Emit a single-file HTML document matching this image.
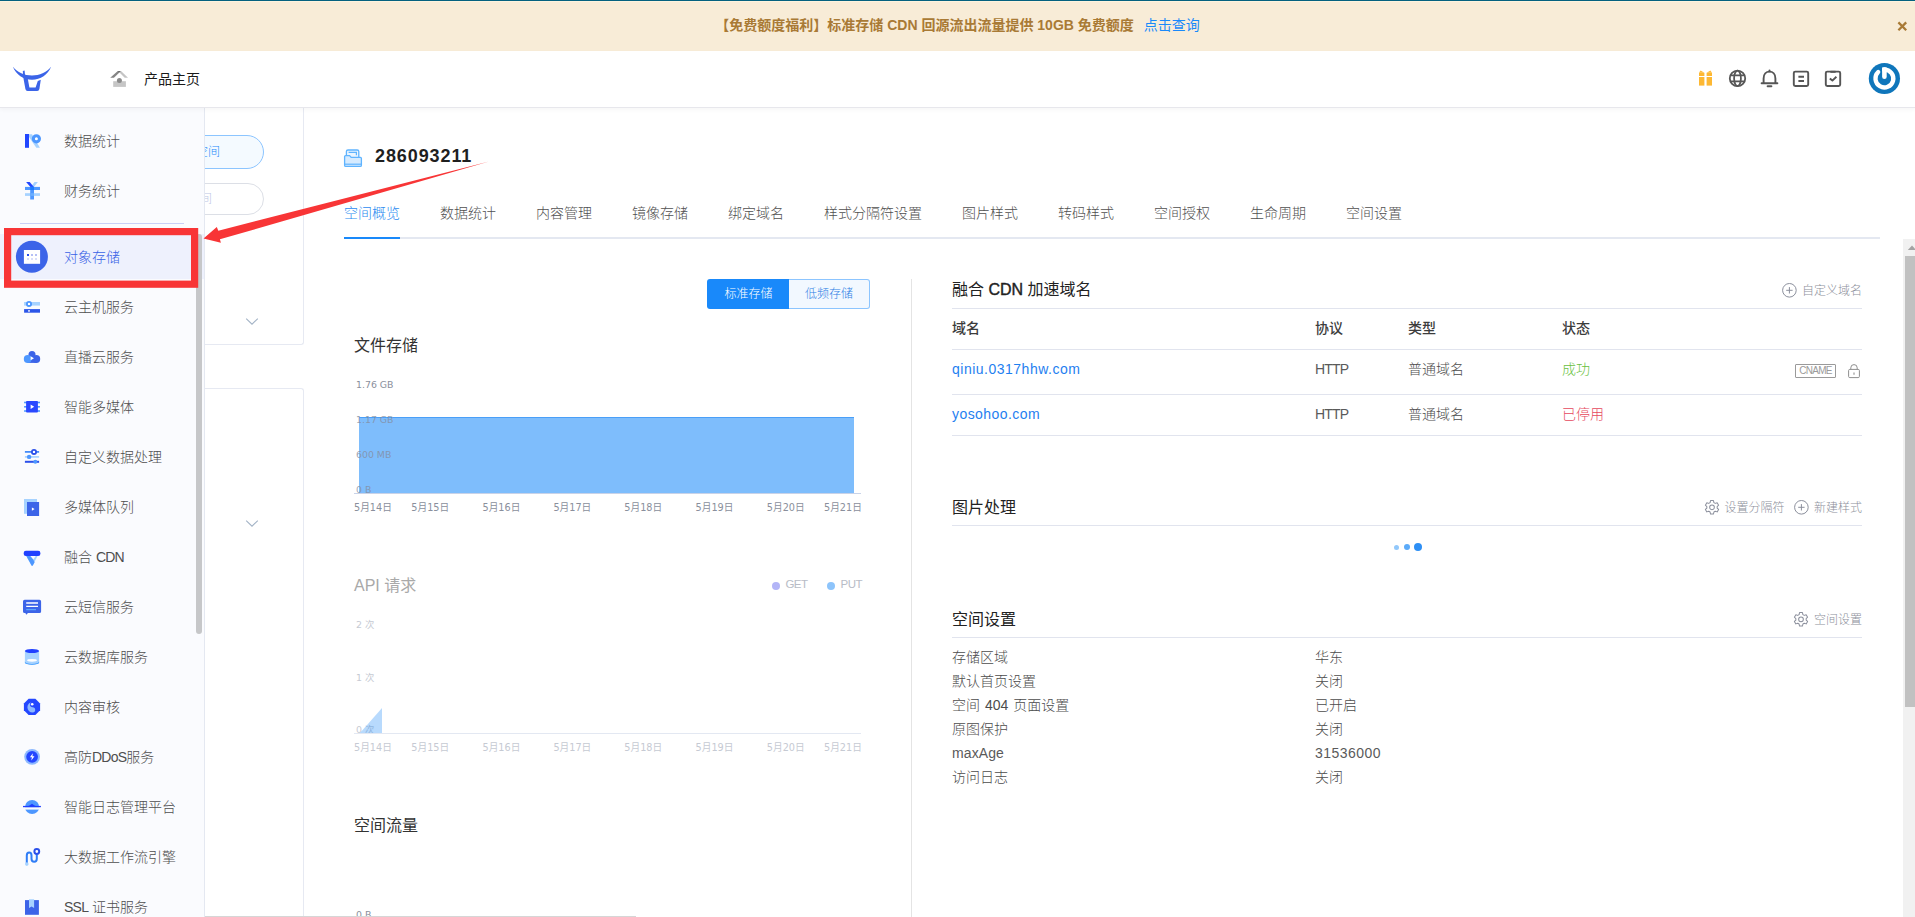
<!DOCTYPE html>
<html lang="zh-CN">
<head>
<meta charset="utf-8">
<title>对象存储 - 286093211</title>
<style>
*{box-sizing:border-box;margin:0;padding:0}
html,body{width:1915px;height:917px;overflow:hidden;background:#fff}
body{font-weight:300;position:relative;font-family:"Liberation Sans","Noto Sans CJK SC",sans-serif;font-size:14px;color:#333;-webkit-font-smoothing:antialiased}
.abs{position:absolute}
.t{position:absolute;white-space:nowrap;line-height:20px;height:20px}
/* top */
#topline{left:0;top:0;width:1915px;height:1px;background:#04617f}
#banner{left:0;top:1px;width:1915px;height:50px;background:#f8ecd7;box-shadow:inset 0 1px 0 #fdf4de}
#banner .msg{left:0;width:1915px;top:14px;text-align:center;font-weight:bold;color:#a97a35;font-size:14px;padding-right:0}
#banner .msg a{color:#1989fa;font-weight:normal;margin-left:6px;text-decoration:none}
#header{left:0;top:51px;width:1915px;height:57px;background:#fff;border-bottom:1px solid #e7e7ec;box-shadow:0 2px 4px rgba(0,0,0,.035);z-index:5}
/* sidebar */
#sidebar{left:0;top:107px;width:205px;height:810px;background:#fafbfe;border-right:1px solid #e4e8f1;z-index:3;overflow:hidden}
.si{position:absolute;left:0;width:204px;height:50px}
.si .lbl{position:absolute;left:64px;top:15px;line-height:20px;font-size:14px;color:#4e4e4e;white-space:nowrap}
.si .lbl i{font-style:normal;letter-spacing:-.75px}
.si svg{position:absolute;left:22px;top:15px;width:20px;height:20px;overflow:visible}
.si.on{background:linear-gradient(#eef1fd,#eef1fd) 0 2px/100% 45px no-repeat}
.si.on .lbl{color:#3a63e6}
/* second column */
#col2{left:205px;top:107px;width:99px;height:810px;background:#fff;z-index:1;overflow:hidden}
#col2 .p{position:absolute;left:0;width:99px;background:#fff;border-right:1px solid #e4e7f0}
/* main */
#main{left:304px;top:107px;width:1599px;height:810px;background:#fff;z-index:1}
.tab{font-size:14px;color:#555;top:203px}
.h16{font-weight:400;font-size:16px;color:#333;line-height:22px;height:22px}
.ax{font-weight:400;font-size:9.4px;color:#8a8f9c;line-height:12px;height:12px;font-family:"DejaVu Sans","Noto Sans CJK SC",sans-serif}
.hl{position:absolute;height:1px;background:#e1e4ee}
.g12{font-size:12px;color:#8d909b;line-height:16px;height:16px}
.row{font-size:14px;color:#4c4c4c}
</style>
</head>
<body>
<div id="topline" class="abs" style="z-index:9"></div>
<div id="banner" class="abs">
  <div class="t msg">【免费额度福利】标准存储 CDN 回源流出流量提供 10GB 免费额度 <a>点击查询</a></div>
  <svg class="abs" style="left:1896.6px;top:20.2px" width="11" height="11" viewBox="0 0 11 11"><path d="M1.4 1.4L9.2 9.2M9.2 1.4L1.4 9.2" stroke="#a97a35" stroke-width="2.3" fill="none"/></svg>
</div>
<div id="header" class="abs">

  <svg class="abs" style="left:0;top:0" width="210" height="56" viewBox="0 51 210 56">
    <!-- logo -->
    <path d="M12.8 66.6 C17.5 72.8 24.5 75.5 32 75.5 C39.5 75.5 46.5 72.8 51.2 66.6 C48 75 40.5 79.8 32 79.8 C23.5 79.8 16 75 12.8 66.6Z" fill="#3b64e8"/>
    <path d="M22.8 71 L24.6 70.4 L25.2 76.6 L27.8 78.8 L29.4 87.6 L35.6 87.6 L37.8 81 L40.8 79.8 L39.4 89 Q39 90.9 37.2 90.9 L27.6 90.9 Q25.8 90.9 25.4 89 L23.4 78 Z" fill="#3b64e8"/>
    <!-- home icon -->
    <path d="M110.2 77.8 L117.8 70.9 L121 70.9 L113.9 77.8Z" fill="#858585"/>
    <path d="M117.8 70.9 L121 70.9 L119.6 72.4Z" fill="#6a6a6a"/>
    <path d="M121 70.9 L128 77.8 L124.7 77.8 L119.5 72.6Z" fill="#c4c4c4"/>
    <rect x="113.2" y="81.2" width="12.7" height="5.7" fill="#c6c6c6"/>
    <circle cx="119.4" cy="80.6" r="2.5" fill="#8a8a8a"/>
  </svg>
  <div class="t" style="left:144px;top:18px;color:#1a1a1a;font-weight:400">产品主页</div>
  <svg class="abs" style="left:1690px;top:7px" width="225" height="44" viewBox="1690 58 225 44">
    <!-- gift -->
    <g fill="#fdb833">
      <path d="M1699 72.8 L1700.6 70.4 L1704.4 72.8Z"/><path d="M1706.6 72.8 L1710.4 70.4 L1712 72.8Z"/>
      <rect x="1699" y="72.8" width="5.4" height="3.2"/><rect x="1706.6" y="72.8" width="5.4" height="3.2"/>
      <rect x="1699" y="77" width="5.4" height="8.6"/><rect x="1706.6" y="77" width="5.4" height="8.6"/>
    </g>
    <!-- globe -->
    <g fill="none" stroke="#575757" stroke-width="1.8">
      <circle cx="1737.5" cy="78.4" r="7.7"/>
      <ellipse cx="1737.5" cy="78.4" rx="3.4" ry="7.7"/>
      <path d="M1730.6 75.4 H1744.4 M1730.6 81.4 H1744.4"/>
    </g>
    <!-- bell -->
    <g fill="none" stroke="#555" stroke-width="1.9" stroke-linecap="round" stroke-linejoin="round">
      <path d="M1761.6 83.2 H1777.4 M1763.6 83.2 V78.4 C1763.6 74 1766.2 71.6 1769.5 71.6 C1772.8 71.6 1775.4 74 1775.4 78.4 V83.2"/>
      <path d="M1769.5 71.4 V70.4"/>
      <path d="M1767.6 86.2 H1771.4"/>
    </g>
    <!-- doc -->
    <g fill="none" stroke="#555" stroke-width="1.9" stroke-linejoin="round">
      <rect x="1793.8" y="71.6" width="14.4" height="14.4" rx="1.4"/>
      <path d="M1798.4 76.8 H1804 M1798.4 81 H1804"/>
    </g>
    <!-- check -->
    <g fill="none" stroke="#555" stroke-width="1.9" stroke-linejoin="round">
      <rect x="1825.8" y="71.6" width="14.4" height="14.4" rx="1.4"/>
      <path d="M1830.4 71.8 H1835.6" stroke-width="2"/>
      <path d="M1829.8 78.4 L1832.4 80.6 L1836.4 76.8"/>
    </g>
    <!-- avatar -->
    <circle cx="1884.4" cy="78.5" r="15.6" fill="#0f76bb"/>
    <path d="M1884.4 69.55 A8.95 8.95 0 1 1 1878.2 72.05" fill="none" stroke="#fff" stroke-width="4.3" stroke-linecap="round"/>
    <path d="M1884.4 69.6 V76.8" stroke="#fff" stroke-width="4.6" stroke-linecap="round"/>
    <rect x="1882.1" y="67.4" width="4.6" height="4" fill="#fff"/>
  </svg>

</div>
<div id="sidebar" class="abs">
<!--SB0-->
<div class="si" style="top:9px"><svg viewBox="0 0 20 20"><path d="M7 3.2 H10 L17.9 16.8 H14.3 L7 6Z" fill="#a6d2ff"/><rect x="3" y="3" width="4" height="13.8" fill="#2146ff"/><circle cx="14.4" cy="7.8" r="3.05" fill="#fff" stroke="#4d97ff" stroke-width="3.1"/></svg><span class="lbl">数据统计</span></div>
<div class="si" style="top:59px"><svg viewBox="0 0 20 20"><path d="M15.9 1.1 L12.5 1.1 L8.8 5.9 L11.9 5.9Z" fill="#a6d2ff"/><path d="M4.1 1.1 L7.7 1.1 L11.9 5.9 L8.4 5.9Z" fill="#2146ff"/><rect x="3" y="12.2" width="15" height="2.7" fill="#a6d2ff"/><rect x="8.2" y="5.9" width="3.8" height="12.6" fill="#4d97ff"/><rect x="3" y="5.9" width="15" height="3.1" fill="#4d97ff"/><rect x="8.2" y="5.9" width="3.8" height="3.1" fill="#1a7bff"/><rect x="8.2" y="12.2" width="3.8" height="2.7" fill="#6aaeff"/></svg><span class="lbl">财务统计</span></div>
<div class="abs" style="left:20px;top:116px;width:164px;height:1px;background:#c9d0f7"></div>
<div class="si on" style="top:125px"><svg viewBox="0 0 20 20"><circle cx="9.9" cy="9.8" r="16" fill="#3c64e8"/><rect x="1.9" y="3" width="16.2" height="13.8" fill="#fff"/><rect x="5" y="7" width="2" height="2" fill="#2b50ea"/><rect x="9" y="7" width="2" height="2" fill="#b5bff5"/><rect x="13" y="7" width="2" height="2" fill="#b5bff5"/><g fill="#d9defa"><rect x="5" y="11" width="2" height="2"/><rect x="9" y="11" width="2" height="2"/><rect x="13" y="11" width="2" height="2"/></g></svg><span class="lbl">对象存储</span></div>
<div class="si" style="top:175px"><svg viewBox="0 0 20 20"><rect x="2.1" y="5" width="15.9" height="3.6" fill="#a6d2ff"/><circle cx="7" cy="6.9" r="2.1" fill="#fff" stroke="#4d97ff" stroke-width="1.8"/><rect x="2.1" y="12.1" width="15.9" height="3.6" fill="#2b55e8"/><rect x="6.2" y="13.1" width="1.6" height="1.6" fill="#fff"/></svg><span class="lbl">云主机服务</span></div>
<div class="si" style="top:225px"><svg viewBox="0 0 20 20"><circle cx="10" cy="7.4" r="3.5" fill="#3c64e8"/><circle cx="14.3" cy="12" r="3.9" fill="#3c64e8"/><rect x="5.6" y="9.4" width="8.8" height="6.5" fill="#3c64e8"/><circle cx="5.7" cy="12" r="3.9" fill="#4d97ff"/><path d="M8.6 9.2 L12 11.2 L8.6 13.2Z" fill="#fff"/></svg><span class="lbl">直播云服务</span></div>
<div class="si" style="top:275px"><svg viewBox="0 0 20 20"><g fill="#4d97ff"><rect x="2.1" y="4.7" width="15.9" height="1.6"/><rect x="2.1" y="9" width="15.9" height="1.6"/><rect x="2.1" y="13.2" width="15.9" height="1.6"/></g><rect x="4.1" y="4" width="11.8" height="11.6" rx=".8" fill="#2a48ff"/><path d="M8.6 7.6 L12.2 9.8 L8.6 12Z" fill="#fff"/></svg><span class="lbl">智能多媒体</span></div>
<div class="si" style="top:325px"><svg viewBox="0 0 20 20"><path d="M2.9 4.9 H17.1" stroke="#3c86f7" stroke-width="1.7"/><circle cx="12" cy="4.9" r="2.1" fill="#fff" stroke="#2b50ea" stroke-width="1.8"/><path d="M2.9 9.9 H17.1" stroke="#a6d2ff" stroke-width="1.7"/><circle cx="7.1" cy="9.9" r="2.2" fill="#4d97ff"/><path d="M2.9 14.8 H17.1" stroke="#2b50ea" stroke-width="2"/><circle cx="13.3" cy="14.8" r="2" fill="#4d97ff"/></svg><span class="lbl">自定义数据处理</span></div>
<div class="si" style="top:375px"><svg viewBox="0 0 20 20"><rect x="2" y="2" width="13" height="14.8" fill="#a6d2ff"/><rect x="5" y="5" width="12.1" height="14" fill="#3c64e8"/><path d="M9.9 10.4 L12.6 12.1 L9.9 13.8Z" fill="#fff"/></svg><span class="lbl">多媒体队列</span></div>
<div class="si" style="top:425px"><svg viewBox="0 0 20 20"><path d="M3.2 7 H16.5 L10.8 18.2 Q10.1 19.4 9.4 18.2Z" fill="#a6d2ff"/><path d="M3.2 7 H8.4 L12.6 15.2 L10.8 18.4 Q10.1 19.4 9.4 18.2Z" fill="#4d97ff"/><path d="M8 8.8 H13.8 L11.4 12.6Z" fill="#fafbfe"/><rect x="1.7" y="3.7" width="16.7" height="5.2" rx="2.2" fill="#2040ff"/></svg><span class="lbl">融合 <i>CDN</i></span></div>
<div class="si" style="top:475px"><svg viewBox="0 0 20 20"><path d="M2.6 2.8 H17.5 Q19.1 2.8 19.1 4.4 V14.4 Q19.1 16 17.5 16 H6 L4.2 17.8 L3.4 16 H2.6 Q1 16 1 14.4 V4.4 Q1 2.8 2.6 2.8Z" fill="#3c64e8"/><path d="M4.2 6 H16 M4.2 9.4 H16" stroke="#fff" stroke-width="1.3"/><path d="M4.2 12.6 H14" stroke="#5aa5ff" stroke-width="1.3"/></svg><span class="lbl">云短信服务</span></div>
<div class="si" style="top:525px"><svg viewBox="0 0 20 20"><path d="M2.9 4 V15.4 A7.1 2.3 0 0 0 17.1 15.4 V4Z" fill="#a6d2ff"/><path d="M2.9 14.6 V15.4 A7.1 2.3 0 0 0 17.1 15.4 V14.6 A7.1 2.3 0 0 1 2.9 14.6Z" fill="#3b9bff"/><ellipse cx="10" cy="13.3" rx="5" ry="1.4" fill="#fff"/><ellipse cx="10" cy="4" rx="7.1" ry="2.1" fill="#2040ff"/></svg><span class="lbl">云数据库服务</span></div>
<div class="si" style="top:575px"><svg viewBox="0 0 20 20"><path d="M6.6 1.8 H13.4 L18.1 6.5 V13.3 L13.4 18 H6.6 L1.9 13.3 V6.5Z" fill="#2447ff"/><path d="M10.6 5 A5.2 5.2 0 0 0 10.6 15.4 A2.6 2.6 0 0 0 10.6 10.2 A2.6 2.6 0 0 1 10.6 5Z" fill="#8db9ff"/><circle cx="10.2" cy="7.2" r="1.3" fill="#fff"/></svg><span class="lbl">内容审核</span></div>
<div class="si" style="top:625px"><svg viewBox="0 0 20 20"><circle cx="10.1" cy="9.8" r="7.9" fill="#8db9ff"/><circle cx="10.1" cy="9.8" r="5.9" fill="#2447ff"/><path d="M10.9 6.2 L7.9 10.3 H9.9 L9.3 13.4 L12.5 9.2 H10.4Z" fill="#fff"/></svg><span class="lbl">高防<i>DDoS</i>服务</span></div>
<div class="si" style="top:675px"><svg viewBox="0 0 20 20"><circle cx="10.1" cy="10" r="7.1" fill="#4d97ff"/><rect x="2" y="10.2" width="16.4" height="2.4" fill="#fafbfe"/><path d="M4.2 9.6 Q7 9.2 10 6.7 Q13 9.2 15.8 9.6Z" fill="#2040ff"/><rect x="1" y="8.9" width="17.9" height="1.3" fill="#2040ff"/></svg><span class="lbl">智能日志管理平台</span></div>
<div class="si" style="top:725px"><svg viewBox="0 0 20 20"><path d="M4.8 16.5 V8.4 Q4.8 5.4 7.2 5.4 Q9.5 5.4 9.5 8.4 V11.8 Q9.5 14.8 12.2 14.8 Q14.8 14.8 14.8 11.8 V7.6" fill="none" stroke="#2f7df6" stroke-width="2"/><circle cx="14.8" cy="4.5" r="2.4" fill="#fff" stroke="#2b50ea" stroke-width="2"/><circle cx="4.8" cy="17.1" r="1.8" fill="#a6d2ff"/></svg><span class="lbl">大数据工作流引擎</span></div>
<div class="si" style="top:775px"><svg viewBox="0 0 20 20"><rect x="3" y="3.1" width="13.9" height="14.7" fill="#3c64e8"/><path d="M7 2.2 H12.1 V10.9 L9.55 9.5 L7 10.9Z" fill="#a6d2ff"/></svg><span class="lbl"><i>SSL</i> 证书服务</span></div>
<div class="abs" style="left:196px;top:127px;width:6px;height:400px;border-radius:3px;background:#c6c7c9"></div>
<!--SB1-->
</div>
<div id="col2" class="abs">

  <div class="abs" style="left:0;top:0;width:99px;height:810px;background:#fff"></div>
  <div class="abs" style="left:0;top:0;width:99px;height:238px;border-right:1px solid #e6e9f2;border-bottom:1px solid #e6e9f2;border-radius:0 0 3px 0"></div>
  <div class="abs" style="left:0;top:281px;width:99px;height:540px;border-right:1px solid #e6e9f2;border-top:1px solid #e6e9f2;border-radius:0 3px 0 0"></div>
  <div class="abs" style="left:-60px;top:28px;width:119px;height:34px;border:1px solid #8cc5ff;border-radius:17px;background:#f4faff"></div>
  <div class="t" style="left:-33px;top:35px;font-size:12px;color:#1989fa">新建空间</div>
  <div class="abs" style="left:-60px;top:76px;width:119px;height:32px;border:1px solid #dcdfe6;border-radius:16px;background:#fff"></div>
  <div class="t" style="left:-41px;top:82px;font-size:12px;color:#bcc6e4">搜索空间</div>
  <svg class="abs" style="left:39px;top:209px" width="16" height="12" viewBox="0 0 16 12"><path d="M2.2 2.6 L8 8.2 L13.8 2.6" fill="none" stroke="#a3b3c6" stroke-width="1.1"/></svg>
  <svg class="abs" style="left:39px;top:411px" width="16" height="12" viewBox="0 0 16 12"><path d="M2.2 2.6 L8 8.2 L13.8 2.6" fill="none" stroke="#a3b3c6" stroke-width="1.1"/></svg>

</div>
<div id="main" class="abs">
<!--MAIN-->
</div>
<!--MN0-->
<div id="layer" class="abs" style="left:0;top:0;width:1915px;height:917px;z-index:2">
<svg class="abs" style="left:343px;top:148px" width="20" height="20" viewBox="343 148 20 20"><path d="M346.4 157 V151.6 Q346.4 150 348 150 H357.2 Q358.8 150 358.8 151.6 V157" fill="#eaf5ff" stroke="#5fb4ff" stroke-width="1.3"/><path d="M348.6 152.4 H356.4 V155.2" fill="none" stroke="#5fb4ff" stroke-width="1.2"/><path d="M345.6 155.6 H349.6 L351.2 157.4 H360.4 Q361.4 157.4 361.4 158.4 V165.2 Q361.4 166.4 360.2 166.4 H345.8 Q344.6 166.4 344.6 165.2 V156.6 Q344.6 155.6 345.6 155.6Z" fill="#d6ebff" stroke="#5fb4ff" stroke-width="1.3"/><path d="M344.8 164.2 H361.2" stroke="#5fb4ff" stroke-width="1.2"/></svg>
<div class="t " style="left:375px;top:143.5px;font-size:18px;font-weight:bold;color:#1f1f1f;letter-spacing:.9px;line-height:24px;height:24px">286093211</div>
<div class="t " style="left:344px;top:202.6px;color:#2d8cf0">空间概览</div>
<div class="t " style="left:440px;top:202.6px;color:#505050">数据统计</div>
<div class="t " style="left:536px;top:202.6px;color:#505050">内容管理</div>
<div class="t " style="left:632px;top:202.6px;color:#505050">镜像存储</div>
<div class="t " style="left:728px;top:202.6px;color:#505050">绑定域名</div>
<div class="t " style="left:824px;top:202.6px;color:#505050">样式分隔符设置</div>
<div class="t " style="left:962px;top:202.6px;color:#505050">图片样式</div>
<div class="t " style="left:1058px;top:202.6px;color:#505050">转码样式</div>
<div class="t " style="left:1154px;top:202.6px;color:#505050">空间授权</div>
<div class="t " style="left:1250px;top:202.6px;color:#505050">生命周期</div>
<div class="t " style="left:1346px;top:202.6px;color:#505050">空间设置</div>
<div class="abs" style="left:344px;top:237px;width:1536px;height:2px;background:#e4e8f1"></div>
<div class="abs" style="left:344px;top:237px;width:56px;height:2px;background:#1989fa"></div>
<div class="abs" style="left:707px;top:279px;width:83px;height:30px;background:#1989fa;border-radius:3px 0 0 3px;color:#fff;font-size:12px;line-height:30px;text-align:center">标准存储</div>
<div class="abs" style="left:789px;top:279px;width:81px;height:30px;background:#f2f8ff;border:1px solid #8cc5ff;border-left:0;border-radius:0 3px 3px 0;color:#2d7fe5;font-size:12px;line-height:28px;text-align:center">低频存储</div>
<div class="abs" style="left:911px;top:279px;width:1px;height:640px;background:#e4e4e4"></div>
<div class="t h16" style="left:354px;top:334.5px;">文件存储</div>
<div class="t ax" style="left:356px;top:378.5px;">1.76 GB</div>
<div class="abs" style="left:359px;top:417px;width:495px;height:76px;background:rgba(25,137,250,.56);border-top:1px solid #4a9ff8"></div>
<div class="t ax" style="left:356px;top:413.5px;color:rgba(132,140,158,.8)">1.17 GB</div>
<div class="t ax" style="left:356px;top:448.5px;color:rgba(132,140,158,.8)">600 MB</div>
<div class="t ax" style="left:356px;top:483.5px;color:rgba(132,140,158,.8)">0 B</div>
<div class="abs" style="left:354px;top:493px;width:507px;height:1px;background:#c9d3e8"></div>
<div class="t ax" style="left:354px;top:501.5px;font-size:9.7px">5月14日</div>
<div class="t ax" style="left:411.3px;top:501.5px;font-size:9.7px">5月15日</div>
<div class="t ax" style="left:482.5px;top:501.5px;font-size:9.7px">5月16日</div>
<div class="t ax" style="left:553.4px;top:501.5px;font-size:9.7px">5月17日</div>
<div class="t ax" style="left:624.3px;top:501.5px;font-size:9.7px">5月18日</div>
<div class="t ax" style="left:695.6px;top:501.5px;font-size:9.7px">5月19日</div>
<div class="t ax" style="left:766.8px;top:501.5px;font-size:9.7px">5月20日</div>
<div class="t ax" style="left:824px;top:501.5px;font-size:9.7px">5月21日</div>
<div class="t h16" style="left:354px;top:574.5px;color:#a9a9a9">API 请求</div>
<div class="abs" style="left:772px;top:582px;width:8px;height:8px;border-radius:4px;background:#b3b5f7"></div>
<div class="t g12" style="left:785.5px;top:576.4px;color:#b8bcc6;font-size:11.5px;letter-spacing:-.6px">GET</div>
<div class="abs" style="left:827px;top:582px;width:8px;height:8px;border-radius:4px;background:#8dc4fb"></div>
<div class="t g12" style="left:840.5px;top:576.4px;color:#b8bcc6;font-size:11.5px;letter-spacing:-.45px">PUT</div>
<div class="t ax" style="left:356px;top:618.5px;color:#c6cad3">2 次</div>
<div class="t ax" style="left:356px;top:671.5px;color:#c6cad3">1 次</div>
<div class="t ax" style="left:356px;top:723.5px;color:#c6cad3">0 次</div>
<svg class="abs" style="left:354px;top:700px" width="40" height="36" viewBox="354 700 40 36"><path d="M360 733 L382 708 V733Z" fill="rgba(25,137,250,.31)"/></svg>
<div class="abs" style="left:354px;top:733px;width:507px;height:1px;background:#e3e8f2"></div>
<div class="t ax" style="left:354px;top:741.5px;color:#c6cad3;font-size:9.7px">5月14日</div>
<div class="t ax" style="left:411.3px;top:741.5px;color:#c6cad3;font-size:9.7px">5月15日</div>
<div class="t ax" style="left:482.5px;top:741.5px;color:#c6cad3;font-size:9.7px">5月16日</div>
<div class="t ax" style="left:553.4px;top:741.5px;color:#c6cad3;font-size:9.7px">5月17日</div>
<div class="t ax" style="left:624.3px;top:741.5px;color:#c6cad3;font-size:9.7px">5月18日</div>
<div class="t ax" style="left:695.6px;top:741.5px;color:#c6cad3;font-size:9.7px">5月19日</div>
<div class="t ax" style="left:766.8px;top:741.5px;color:#c6cad3;font-size:9.7px">5月20日</div>
<div class="t ax" style="left:824px;top:741.5px;color:#c6cad3;font-size:9.7px">5月21日</div>
<div class="t h16" style="left:354px;top:814.5px;">空间流量</div>
<div class="t ax" style="left:356px;top:908.5px;">0 B</div>
<div class="t h16" style="left:952px;top:278.5px;color:#222">融合 <b style="font-weight:400;-webkit-text-stroke:.4px #222">CDN</b> 加速域名</div>
<svg class="abs" style="left:1782px;top:283px" width="15" height="15" viewBox="0 0 15 15"><circle cx="7.4" cy="7.3" r="6.8" fill="none" stroke="#8b8f9c" stroke-width="1"/><path d="M4.2 7.3 H10.6 M7.4 4.1 V10.5" stroke="#8b8f9c" stroke-width="1"/></svg>
<div class="t g12" style="right:53px;top:283px;">自定义域名</div>
<div class="abs" style="left:952px;top:308px;width:910px;height:1px;background:#e1e4ee"></div>
<div class="t " style="left:952px;top:317.6px;font-weight:500;color:#3c3c3c">域名</div>
<div class="t " style="left:1315px;top:317.6px;font-weight:500;color:#3c3c3c">协议</div>
<div class="t " style="left:1408px;top:317.6px;font-weight:500;color:#3c3c3c">类型</div>
<div class="t " style="left:1562px;top:317.6px;font-weight:500;color:#3c3c3c">状态</div>
<div class="abs" style="left:952px;top:349px;width:910px;height:1px;background:#e1e4ee"></div>
<div class="t " style="left:952px;top:358.6px;color:#1f80f0;letter-spacing:.5px">qiniu.0317hhw.com</div>
<div class="t row" style="left:1315px;top:358.6px;letter-spacing:-.8px;color:#5a5a5a">HTTP</div>
<div class="t row" style="left:1408px;top:358.6px;">普通域名</div>
<div class="t " style="left:1562px;top:358.6px;color:#6abf40">成功</div>
<div class="abs" style="left:1795px;top:364px;width:41px;height:14px;border:1px solid #9a9a9a;border-radius:1px;font-size:10px;line-height:12px;text-align:center;color:#9a9a9a;letter-spacing:-.75px">CNAME</div>
<svg class="abs" style="left:1846px;top:362px" width="16" height="18" viewBox="1846 362 16 18"><rect x="1848.6" y="369.4" width="10.8" height="8.2" rx="1.2" fill="none" stroke="#8f8f8f" stroke-width="1"/><path d="M1850.8 369.4 V367.8 A3.2 3.2 0 0 1 1857.2 367.8 V369.4" fill="none" stroke="#8f8f8f" stroke-width="1"/><path d="M1854 372.4 V374.8" stroke="#8f8f8f" stroke-width="1.1"/></svg>
<div class="abs" style="left:952px;top:394px;width:910px;height:1px;background:#e1e4ee"></div>
<div class="t " style="left:952px;top:403.6px;color:#1f80f0;letter-spacing:.44px">yosohoo.com</div>
<div class="t row" style="left:1315px;top:403.6px;letter-spacing:-.8px;color:#5a5a5a">HTTP</div>
<div class="t row" style="left:1408px;top:403.6px;">普通域名</div>
<div class="t " style="left:1562px;top:403.6px;color:#e5485d">已停用</div>
<div class="abs" style="left:952px;top:435px;width:910px;height:1px;background:#e1e4ee"></div>
<div class="t h16" style="left:952px;top:496.5px;color:#222">图片处理</div>
<svg class="abs" style="left:1704px;top:500px;overflow:visible" width="16" height="16" viewBox="0 0 16 16"><g transform="translate(8 7.3) scale(1.12) translate(-8 -7.6)"><path d="M6.7 1.6 H9.3 L9.7 3.4 L10.9 4.1 L12.6 3.5 L13.9 5.7 L12.6 6.9 V8.3 L13.9 9.5 L12.6 11.7 L10.9 11.1 L9.7 11.8 L9.3 13.6 H6.7 L6.3 11.8 L5.1 11.1 L3.4 11.7 L2.1 9.5 L3.4 8.3 V6.9 L2.1 5.7 L3.4 3.5 L5.1 4.1 L6.3 3.4Z" fill="none" stroke="#8b8f9c" stroke-width=".9" stroke-linejoin="round"/><circle cx="8" cy="7.6" r="2.1" fill="none" stroke="#8b8f9c" stroke-width=".9"/></g></svg>
<div class="t g12" style="right:130.5px;top:500.1px;">设置分隔符</div>
<svg class="abs" style="left:1794px;top:500px" width="15" height="15" viewBox="0 0 15 15"><circle cx="7.4" cy="7.3" r="6.8" fill="none" stroke="#8b8f9c" stroke-width="1"/><path d="M4.2 7.3 H10.6 M7.4 4.1 V10.5" stroke="#8b8f9c" stroke-width="1"/></svg>
<div class="t g12" style="right:53px;top:500.1px;">新建样式</div>
<div class="abs" style="left:952px;top:525px;width:910px;height:1px;background:#e1e4ee"></div>
<div class="abs" style="left:1394.4px;top:544.5px;width:5px;height:5px;border-radius:3px;background:#92c8fb"></div>
<div class="abs" style="left:1404.3px;top:544px;width:6px;height:6px;border-radius:3px;background:#5cabf9"></div>
<div class="abs" style="left:1414.4px;top:543.4px;width:7.2px;height:7.2px;border-radius:4px;background:#2d8ff5"></div>
<div class="t h16" style="left:952px;top:608.5px;color:#222">空间设置</div>
<svg class="abs" style="left:1793px;top:611.5px;overflow:visible" width="16" height="16" viewBox="0 0 16 16"><g transform="translate(8 7.3) scale(1.12) translate(-8 -7.6)"><path d="M6.7 1.6 H9.3 L9.7 3.4 L10.9 4.1 L12.6 3.5 L13.9 5.7 L12.6 6.9 V8.3 L13.9 9.5 L12.6 11.7 L10.9 11.1 L9.7 11.8 L9.3 13.6 H6.7 L6.3 11.8 L5.1 11.1 L3.4 11.7 L2.1 9.5 L3.4 8.3 V6.9 L2.1 5.7 L3.4 3.5 L5.1 4.1 L6.3 3.4Z" fill="none" stroke="#8b8f9c" stroke-width=".9" stroke-linejoin="round"/><circle cx="8" cy="7.6" r="2.1" fill="none" stroke="#8b8f9c" stroke-width=".9"/></g></svg>
<div class="t g12" style="right:53px;top:612.1px;">空间设置</div>
<div class="abs" style="left:952px;top:637px;width:910px;height:1px;background:#e1e4ee"></div>
<div class="t row" style="left:952px;top:646.6px;">存储区域</div>
<div class="t row" style="left:1315px;top:646.6px;">华东</div>
<div class="t row" style="left:952px;top:670.6px;">默认首页设置</div>
<div class="t row" style="left:1315px;top:670.6px;">关闭</div>
<div class="t row" style="left:952px;top:694.6px;word-spacing:1.1px">空间 404 页面设置</div>
<div class="t row" style="left:1315px;top:694.6px;">已开启</div>
<div class="t row" style="left:952px;top:718.6px;">原图保护</div>
<div class="t row" style="left:1315px;top:718.6px;">关闭</div>
<div class="t row" style="left:952px;top:742.6px;letter-spacing:.1px;color:#5a5a5a">maxAge</div>
<div class="t row" style="left:1315px;top:742.6px;letter-spacing:.45px;color:#5a5a5a">31536000</div>
<div class="t row" style="left:952px;top:766.6px;">访问日志</div>
<div class="t row" style="left:1315px;top:766.6px;">关闭</div>
<div class="abs" style="left:1903px;top:239px;width:17px;height:680px;background:#f1f1f1"></div>
<div class="abs" style="left:1905px;top:256px;width:13px;height:451px;background:#c1c1c1"></div>
<svg class="abs" style="left:1903px;top:239px" width="12" height="17" viewBox="1903 239 12 17"><path d="M1907.8 250 L1912 245.6 L1916.2 250Z" fill="#a3a3a3"/></svg>
<div class="abs" style="left:0px;top:916px;width:636px;height:1px;background:#d6d6d6"></div>
</div>
<!--MN1-->
<svg class="abs" style="left:0;top:0;z-index:8;pointer-events:none" width="1915" height="917" viewBox="0 0 1915 917">
  <rect x="7.6" y="231.6" width="187" height="52.6" fill="none" stroke="#f83536" stroke-width="7.2"/>
  <path d="M203.5 238.5 L216.8 227.1 L218.3 230.7 L489 161.6 L219.9 239.3 L220.9 242.8 Z" fill="#f83536"/>
</svg>
</body>
</html>
